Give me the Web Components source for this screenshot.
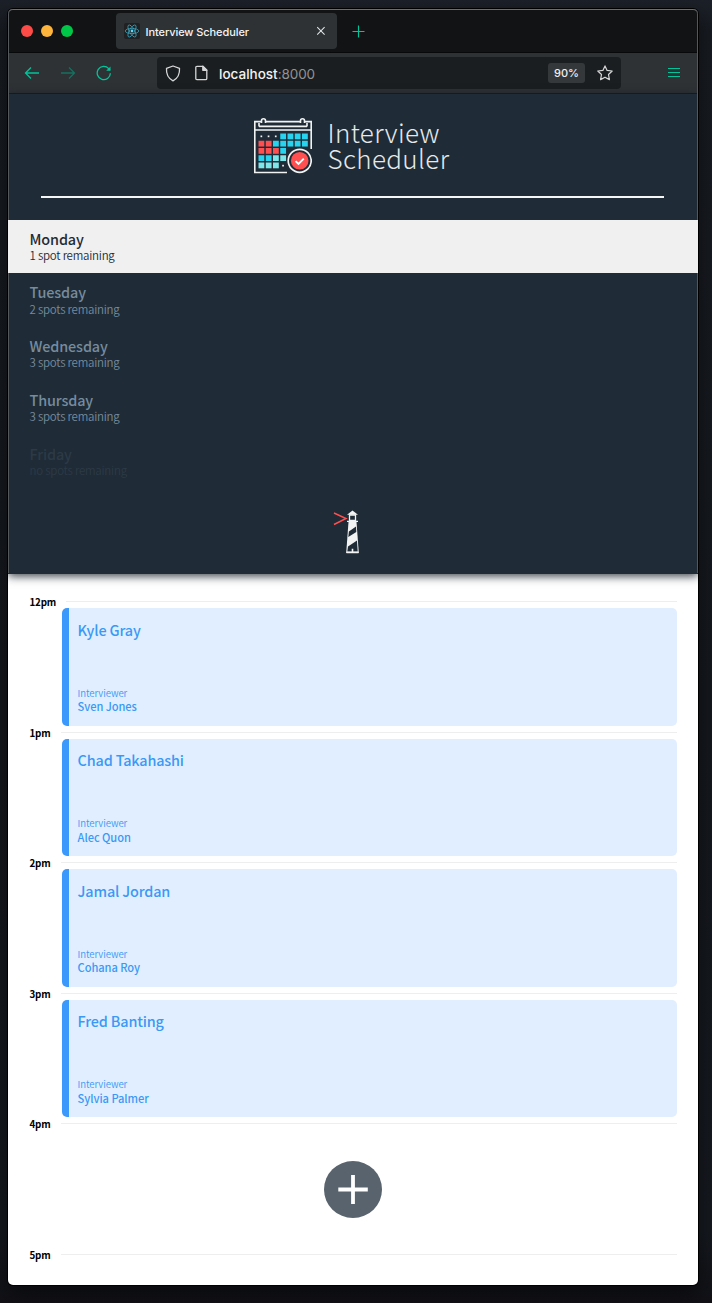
<!DOCTYPE html>
<html lang="en">
<head>
<meta charset="utf-8">
<title>Interview Scheduler</title>
<style>
html,body{margin:0;height:1303px;overflow:hidden}
body{background:linear-gradient(180deg,#1c2028 0,#171b21 30px,#14171c 700px,#15191f 1230px,#111116 1303px);padding:9px 14px 18px 8px;box-sizing:border-box;font-family:"Noto Sans CJK SC","Noto Sans",sans-serif}
</style>
</head>
<body>
<browser-window>
  <tab-strip slot="tabs">Interview Scheduler</tab-strip>
  <address-bar slot="bar" host="localhost" port=":8000" zoom="90%"></address-bar>
  <side-bar>
    <day-item name="Monday" selected>1 spot remaining</day-item>
    <day-item name="Tuesday">2 spots remaining</day-item>
    <day-item name="Wednesday">3 spots remaining</day-item>
    <day-item name="Thursday">3 spots remaining</day-item>
    <day-item name="Friday" full>no spots remaining</day-item>
  </side-bar>
  <day-schedule>
    <hour-slot time="12pm" class="first"><interview-card interviewer="Sven Jones">Kyle Gray</interview-card></hour-slot>
    <hour-slot time="1pm"><interview-card interviewer="Alec Quon">Chad Takahashi</interview-card></hour-slot>
    <hour-slot time="2pm"><interview-card interviewer="Cohana Roy">Jamal Jordan</interview-card></hour-slot>
    <hour-slot time="3pm"><interview-card interviewer="Sylvia Palmer">Fred Banting</interview-card></hour-slot>
    <hour-slot time="4pm"><add-button></add-button></hour-slot>
    <hour-slot time="5pm"></hour-slot>
  </day-schedule>
</browser-window>
<script>
function define(name, render) {
  customElements.define(name, class extends HTMLElement {
    constructor() { super(); this.attachShadow({mode: "open"}); }
    connectedCallback() { this.shadowRoot.innerHTML = render(this); }
  });
}

define("browser-window", () => `<style>
:host{display:flex;flex-direction:column;box-sizing:border-box;width:690px;height:1276px;border-radius:5px;overflow:hidden;background:#fff;box-shadow:0 0 0 1px #000,0 8px 20px rgba(0,0,0,.5);position:relative}
.rim{position:absolute;inset:0;border:1px solid #54585b;border-top-color:#6c6e70;border-bottom:0;height:564px;border-radius:5px 5px 0 0;box-sizing:border-box;pointer-events:none;z-index:3;clip-path:polygon(0 0,100% 0,100% 211px,calc(100% - 2px) 211px,calc(100% - 2px) 264px,100% 264px,100% 100%,0 100%,0 264px,2px 264px,2px 211px,0 211px)}
</style><slot name="tabs"></slot><slot name="bar"></slot><slot></slot><div class="rim"></div>`);

define("tab-strip", () => `<style>
:host{display:flex;height:44px;box-sizing:border-box;background:#111314;border-bottom:1px solid #08090a;padding:4px 0 0 13px;font:500 11px/36px Inter,sans-serif;color:#f4f4f5;flex:none}
.dots{display:flex;gap:8px;align-items:center;height:36px;width:95px}
i{width:12px;height:12px;border-radius:50%}
.tab{display:flex;align-items:center;width:221px;height:36px;box-sizing:border-box;background:#2e3235;border-radius:4px;padding:0 11px 0 8px}
.fav{margin-right:5.500px}.t{flex:1;padding-top:2px;white-space:nowrap;letter-spacing:-.08px}
.plus{margin:12px 0 0 15px}
svg{display:block}
</style><div class="dots"><i style="background:#ff4b47"></i><i style="background:#ffb43c"></i><i style="background:#00c748"></i></div>
<div class="tab"><svg class="fav" width="16" height="16" viewBox="0 0 16 16"><rect width="16" height="16" rx="2" fill="#202122"/><g fill="none" stroke="#3d9fb8" stroke-width=".8"><ellipse cx="8" cy="8" rx="6.8" ry="2.6"/><ellipse cx="8" cy="8" rx="6.8" ry="2.6" transform="rotate(60 8 8)"/><ellipse cx="8" cy="8" rx="6.8" ry="2.6" transform="rotate(120 8 8)"/></g><circle cx="8" cy="8" r="1.4" fill="#61dafb"/></svg><span class="t"><slot></slot></span>
<svg width="10" height="10" viewBox="0 0 10 10"><path d="M1.2 1.2l7.4 7.4M8.600 1.200l-7.400 7.400" stroke="#e4e5e6" stroke-width="1.050"/></svg></div>
<svg class="plus" width="13" height="13" viewBox="0 0 13 13"><path d="M0.500 6.500h12M6.500 .5v12" stroke="#00c49a" stroke-width="1.200"/></svg>`);

define("address-bar", e => `<style>
:host{display:flex;align-items:center;height:41px;box-sizing:border-box;background:#2e3235;border-bottom:1px solid #171b20;padding:0 16px 0 16px;flex:none;font:13.500px/20px Inter,sans-serif}
svg{display:block}
.nav{display:flex;gap:20px;width:133px}
.field{display:flex;align-items:center;width:464px;height:32px;box-sizing:border-box;background:#1b1e20;border-radius:4px;padding:0 8px 0 8px}
.host{margin-left:10px;color:#f2f2f3;font-weight:500;font-size:13.500px;padding-top:2px}
.port{color:#919395;flex:1;padding-top:2px;letter-spacing:-.1px}
.zoom{background:#34383b;border-radius:3px;width:37px;height:20px;text-align:center;font:500 11px/21px Inter,sans-serif;color:#f0f0f1;margin-right:12px}
.menu{margin-left:46px}
</style><div class="nav">
<svg width="16" height="16" viewBox="0 0 16 16" fill="none" stroke="#00c49a" stroke-width="1.300"><path d="M15 8H1.500M7 2.500L1.500 8L7 13.500"/></svg>
<svg width="16" height="16" viewBox="0 0 16 16" fill="none" stroke="#14705f" stroke-width="1.300"><path d="M1 8h13.500M9 2.500L14.500 8L9 13.500"/></svg>
<svg width="16" height="16" viewBox="0 0 16 16" fill="none" stroke="#00c49a" stroke-width="1.300"><path d="M14.400 8.300A6.600 6.600 0 1 1 12.700 3.600L14 5"/><path d="M14.500 1.500v4.300h-4.300z" fill="#00c49a" stroke="none"/></svg></div>
<div class="field"><svg width="16" height="17" viewBox="0 0 16 17" fill="none" stroke="#d5d6d7" stroke-width="1.300"><path d="M8 1L14.500 3.400C14.900 8.500 13 13.200 8 15.900C3 13.200 1.100 8.500 1.500 3.400Z" stroke-linejoin="round"/></svg>
<svg style="margin-left:13px" width="15" height="16" viewBox="0 0 15 16" fill="none" stroke="#d5d6d7" stroke-width="1.300" stroke-linejoin="round"><path d="M3 1.300H8.800L12.800 5.300V13.500Q12.800 14.700 11.600 14.700H3Q1.800 14.700 1.800 13.500V2.500Q1.800 1.300 3 1.300Z"/><path d="M8.800 1.300v4h4z" fill="#d5d6d7"/></svg>
<span class="host">${e.getAttribute("host")}</span><span class="port">${e.getAttribute("port")}</span>
<span class="zoom">${e.getAttribute("zoom")}</span>
<svg width="16" height="16" viewBox="0 0 16 16" fill="none" stroke="#d5d6d7" stroke-width="1.200" stroke-linejoin="round"><path d="M8 .9L10.100 5.400L15.200 6L11.500 9.500L12.400 14.600L8 12.200L3.600 14.600L4.500 9.500L.8 6L5.900 5.400Z"/></svg></div>
<svg class="menu" width="14" height="12" viewBox="0 0 14 12"><path d="M1 1.500h12M1 5.500h12M1 9.500h12" stroke="#00c49a" stroke-width="1.200"/></svg>`);

define("brand-logo", () => {
  const rows = ["   cccc", "rrccccc", "rrrc", "ccll", "lll"];
  const fill = {c: "#27d3ee", r: "#ff4f50", l: "#7de6ea"};
  let cells = "";
  rows.forEach((row, j) => [...row].forEach((k, i) => {
    if (fill[k]) cells += `<rect x="${4.5 + i * 7.25}" y="${15.5 + j * 7.25}" width="5.800" height="5.800" fill="${fill[k]}"/>`;
  }));
  return `<style>
:host{display:flex;justify-content:center;height:58px;padding-right:1px}
svg{display:block;margin-right:16px}
div{font-weight:200;font-size:26px;letter-spacing:.36px;color:#e6e9eb;padding-top:1px;width:124px;white-space:nowrap}
span{display:block;line-height:26px}
</style><svg width="58" height="58" viewBox="0 0 58 58"><g fill="none" stroke="#f1f3f3" stroke-width="1.600"><path d="M7 3.600H.8V54.500H33M11 3.600H47M51 3.600H57.200V31M.8 12H57.200M5 8.400H53M5 8.400V5M53 8.400V5"/><path d="M7.500 5V2.800a2 2 0 0 1 4 0V5M46.500 5V2.800a2 2 0 0 1 4 0V5"/></g><g fill="#f1f3f3"><rect x="6.500" y="17.500" width="1.700" height="1.700"/><rect x="13.700" y="17.500" width="1.700" height="1.700"/><rect x="20.900" y="17.500" width="1.700" height="1.700"/><rect x="28.200" y="46.800" width="1.700" height="1.700"/></g>${cells}
<circle cx="45.700" cy="42.800" r="11.500" fill="#202b36" stroke="#f1f3f3" stroke-width="1.700"/><circle cx="45.700" cy="42.800" r="8.800" fill="#ff4f50"/><path d="M41.600 43.100l2.900 2.900 5.300-5.300" fill="none" stroke="#fff" stroke-width="1.900"/></svg><div><span>Interview</span><span>Scheduler</span></div>`;
});

define("light-house", () => `<style>:host{display:block}svg{display:block}</style>
<svg width="28" height="44" viewBox="0 0 28 44"><path d="M1 3L13 8.500L1 14.500" fill="none" stroke="#ff4f50" stroke-width="1.500"/><path d="M19.500 .5L25 4.800H14Z" fill="#f3f3f3"/><path d="M16.500 5h6v5.500h-6zM14 11.300h11" fill="none" stroke="#f3f3f3" stroke-width="1.300"/><path d="M15.500 12h8l2.300 31h-12.600z" fill="#f3f3f3"/><path d="M15.900 21.500L23 16.500L23.300 22L15.300 27ZM15 36.500L24 30.500L24.700 41.500H14.300Z" fill="#1f2b36"/><path d="M13.500 42.500h12M19.500 38.800v4" stroke="#f3f3f3" stroke-width="1.600"/></svg>`);

define("side-bar", () => `<style>
:host{display:flex;flex-direction:column;align-items:stretch;height:480px;box-sizing:border-box;background:#1f2b36;box-shadow:0 2px 9px rgba(15,25,35,.85);flex:none;position:relative;padding-top:24px}
hr{margin:20px 34px 22px 33px;border:0;height:2px;background:#f4f5f5}
nav{display:flex;flex-direction:column}
light-house{align-self:center;margin-top:21.500px;margin-left:-13px}
</style><brand-logo></brand-logo><hr><nav><slot></slot></nav><light-house></light-house>`);

define("day-item", e => `<style>
:host{display:block;height:53.800px;box-sizing:border-box;padding:10px 21.500px 0;color:#768c9e}
:host([selected]){background:#f0f0f0;color:#1f2b36;height:53.300px}
:host([full]){color:#2c3a46}
h2{margin:0;font-weight:500;font-size:14.400px;line-height:18px;letter-spacing:-.12px}
p{margin:0;font-weight:350;font-size:11.500px;line-height:15px;letter-spacing:-.24px;margin-top:.4px}
</style><h2>${e.getAttribute("name")}</h2><p><slot></slot></p>`);

define("day-schedule", () => `<style>:host{display:flex;flex-direction:column;padding:21px 21px 0}</style><slot></slot>`);

define("hour-slot", e => `<style>
:host{display:block;height:130.500px;flex:none}
header{display:flex;align-items:center;height:13px}
b{width:32px;font-size:9.800px;line-height:13px;font-weight:700;color:#000;padding:1.500px 0 0 .5px;height:14px;letter-spacing:-.2px;box-sizing:border-box}
:host(.first) b{width:37px}
span{flex:1;height:1px;background:#eee}
</style><header><b>${e.getAttribute("time")}</b><span></span></header><slot></slot>`);

define("interview-card", e => `<style>
:host{display:flex;flex-direction:column;box-sizing:border-box;height:117.500px;margin-left:33px;border-left:7px solid #3b99fc;border-radius:5px;background:#e1eeff;color:#3b99f5;padding:12.500px 9px 0 8.600px}
h3{margin:0 0 19px;font-weight:500;font-size:14.400px;line-height:18px;height:47px;letter-spacing:-.15px}
small{font-size:9.600px;line-height:13px;font-weight:350;letter-spacing:-.08px}
strong{font-size:11.100px;line-height:14px;font-weight:500;margin-top:-.5px;letter-spacing:-.06px}
</style><h3><slot></slot></h3><small>Interviewer</small><strong>${e.getAttribute("interviewer")}</strong>`);

define("add-button", () => `<style>:host{display:flex;justify-content:center;padding-top:31px}svg{display:block}</style>
<svg width="58" height="58" viewBox="0 0 58 58"><ellipse cx="29" cy="28.500" rx="29" ry="28.500" fill="#58636d"/><path d="M14.300 28.500h29.500M29 14v29" stroke="#fff" stroke-width="3.800"/></svg>`);
</script>
</body>
</html>
